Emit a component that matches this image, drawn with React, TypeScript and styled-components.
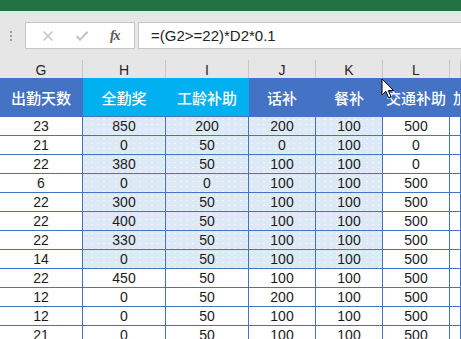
import React from "react";
import styled, { createGlobalStyle } from "styled-components";

const Global = createGlobalStyle`
  html, body { margin: 0; padding: 0; background: #fff; overflow: hidden; }
  body { font-family: "Liberation Sans", Arial, sans-serif; }
`;

const Page = styled.div`
  width: 461px;
  height: 339px;
  overflow: hidden;
  position: relative;
  display: flex;
  flex-direction: column;
`;

const TitleStrip = styled.div`
  height: 11px;
  background: #217346;
  flex: none;
`;

const Toolbar = styled.div`
  height: 49px;
  background: #e6e6e6;
  display: flex;
  align-items: flex-start;
  padding-top: 11px;
  box-sizing: border-box;
  flex: none;
`;

const Grip = styled.div`
  width: 25px;
  height: 27px;
  display: flex;
  flex-direction: column;
  align-items: center;
  justify-content: center;
  gap: 2px;
  padding-right: 4px;
  box-sizing: border-box;
  span {
    width: 2px;
    height: 2px;
    background: #9a9a9a;
  }
`;

const ButtonBox = styled.div`
  width: 110px;
  height: 27px;
  box-sizing: border-box;
  background: #fff;
  border: 1px solid #c6c6c6;
  display: flex;
  align-items: center;
  justify-content: space-around;
  padding: 0 4px 0 6px;
`;

const FxLabel = styled.span`
  font-family: "Liberation Serif", "Times New Roman", serif;
  font-style: italic;
  font-weight: 700;
  font-size: 14px;
  color: #5a5a5a;
  letter-spacing: -1px;
`;

const FormulaInput = styled.div`
  flex: 1;
  margin-left: 3px;
  height: 27px;
  box-sizing: border-box;
  background: #fff;
  border: 1px solid #c6c6c6;
  border-right: none;
  display: flex;
  align-items: center;
  padding-left: 12px;
  font-size: 15px;
  color: #222;
  white-space: nowrap;
`;

const COLS = "83px 83px 83px 67px 67px 67px 1fr";

const LetterRow = styled.div`
  display: grid;
  grid-template-columns: ${COLS};
  height: 18px;
  background: #e6e6e6;
  flex: none;
`;

const Letter = styled.div`
  border-right: 1px solid #c8c8c8;
  display: flex;
  align-items: center;
  justify-content: center;
  font-size: 14px;
  color: #262626;
  padding-top: 2px;
  box-sizing: border-box;
`;

const HeaderRow = styled.div`
  display: grid;
  grid-template-columns: ${COLS};
  height: 39px;
  flex: none;
`;

const HeaderCell = styled.div<{ $cyan?: boolean }>`
  background: ${(p) => (p.$cyan ? "#00b0f0" : "#4472c4")};
  border-right: 1px solid ${(p) => (p.$cyan ? "#00b0f0" : "#4472c4")};
  border-bottom: 1px solid #4472c4;
  box-sizing: border-box;
  color: #fff;
  font-family: "Noto Sans CJK SC", "Noto Sans", sans-serif;
  font-weight: 500;
  font-size: 15px;
  display: flex;
  align-items: center;
  justify-content: center;
  white-space: nowrap;
  overflow: hidden;
  padding-top: 1px;
`;

const ClipHeaderCell = styled(HeaderCell)`
  justify-content: flex-start;
  padding-left: 3px;
`;

const DataRow = styled.div`
  display: grid;
  grid-template-columns: ${COLS};
  height: 19px;
  flex: none;
`;

const Cell = styled.div<{ $sel?: boolean }>`
  border-right: 1px solid #4472c4;
  border-bottom: 1px solid #4472c4;
  box-sizing: border-box;
  background-color: ${(p) => (p.$sel ? "#ddeaf6" : "#fff")};
  background-image: ${(p) =>
    p.$sel
      ? "radial-gradient(circle, rgba(255,255,255,0.55) 0.6px, transparent 0.9px)"
      : "none"};
  background-size: 6px 5px;
  display: flex;
  align-items: center;
  justify-content: center;
  font-size: 14px;
  color: #1a1a1a;
  line-height: 1;
`;

const Cursor = styled.svg`
  position: absolute;
  left: 381px;
  top: 78px;
`;

const letters = ["G", "H", "I", "J", "K", "L", ""];
const headers = ["出勤天数", "全勤奖", "工龄补助", "话补", "餐补", "交通补助"];
const cyan = [false, true, true, false, false, false];

const data: number[][] = [
  [23, 850, 200, 200, 100, 500],
  [21, 0, 50, 0, 100, 0],
  [22, 380, 50, 100, 100, 0],
  [6, 0, 0, 100, 100, 500],
  [22, 300, 50, 100, 100, 500],
  [22, 400, 50, 100, 100, 500],
  [22, 330, 50, 100, 100, 500],
  [14, 0, 50, 100, 100, 500],
  [22, 450, 50, 100, 100, 500],
  [12, 0, 50, 200, 100, 500],
  [12, 0, 50, 100, 100, 500],
  [21, 0, 50, 100, 100, 500],
];

export default function App() {
  return (
    <Page>
      <Global />
      <TitleStrip />
      <Toolbar>
        <Grip>
          <span />
          <span />
          <span />
        </Grip>
        <ButtonBox>
          <svg width="12" height="12" viewBox="0 0 12 12">
            <path d="M1.5 1.5 L10.5 10.5 M10.5 1.5 L1.5 10.5" stroke="#c4c4c4" strokeWidth="1.6" />
          </svg>
          <svg width="14" height="12" viewBox="0 0 14 12">
            <path d="M1.5 6 L5 9.8 L12.5 1.8" stroke="#c4c4c4" strokeWidth="2" fill="none" />
          </svg>
          <FxLabel>fx</FxLabel>
        </ButtonBox>
        <FormulaInput>=(G2&gt;=22)*D2*0.1</FormulaInput>
      </Toolbar>
      <LetterRow>
        {letters.map((l, i) => (
          <Letter key={i}>{l}</Letter>
        ))}
      </LetterRow>
      <HeaderRow>
        {headers.map((h, i) => (
          <HeaderCell key={i} $cyan={cyan[i]}>
            {h}
          </HeaderCell>
        ))}
        <ClipHeaderCell>加</ClipHeaderCell>
      </HeaderRow>
      {data.map((row, r) => (
        <DataRow key={r}>
          {row.map((v, c) => (
            <Cell key={c} $sel={r < 8 && c >= 1 && c <= 4}>
              {v}
            </Cell>
          ))}
          <Cell />
        </DataRow>
      ))}
      <Cursor width="14" height="22" viewBox="0 0 14 22">
        <path
          d="M1 1 L1 17 L4.8 13.3 L7.6 19.8 L10 18.8 L7.3 12.5 L12.5 12.5 Z"
          fill="#fff"
          stroke="#000"
          strokeWidth="1"
          strokeLinejoin="round"
        />
      </Cursor>
    </Page>
  );
}
